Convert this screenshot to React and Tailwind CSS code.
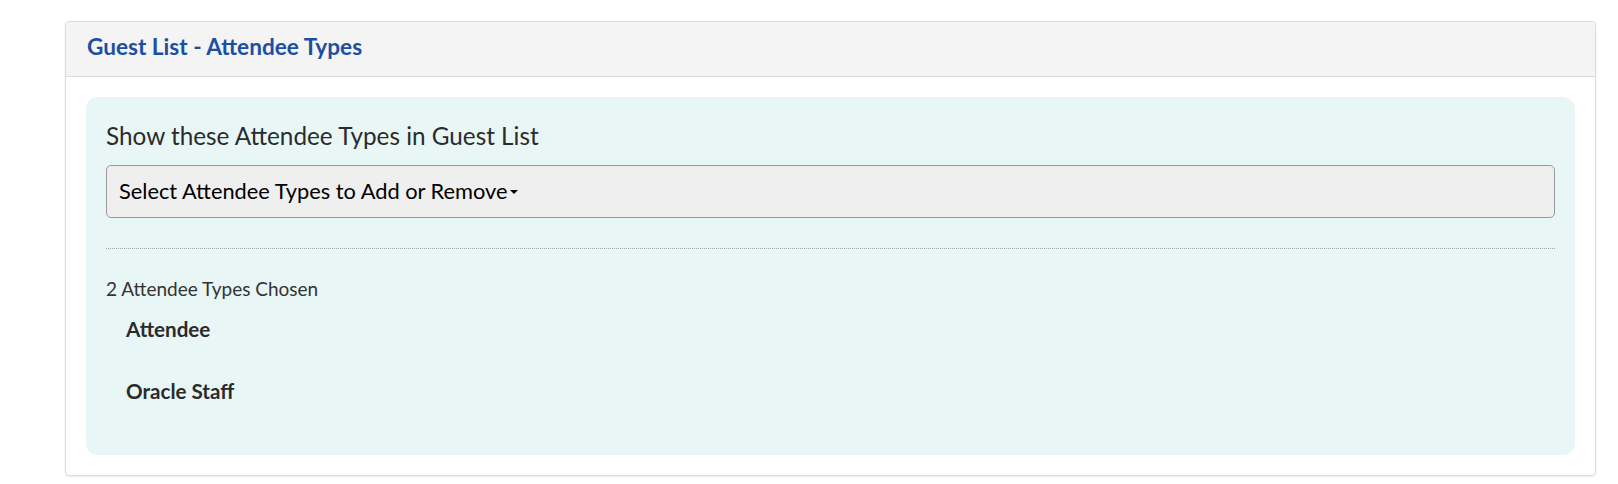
import { useState } from 'react'

const CHOSEN = ['Attendee', 'Oracle Staff']

export default function App() {
  const [open, setOpen] = useState(false)

  return (
    <div className="min-h-[484px] bg-white pt-[21px] pl-[65px] pr-[22px] font-['Lato',sans-serif]">
      <div className="overflow-hidden rounded-[4px] border border-[#dcdcdc] bg-white shadow-[0_1px_2px_rgba(0,0,0,0.08)]">
        {/* Header */}
        <div className="flex h-[55px] items-center border-b border-[#dcdcdc] bg-[#f4f4f4] px-[21px] pb-[4px]">
          <h2 className="text-[22.6px] font-bold leading-[28px] text-[#1c4fa1]">Guest List - Attendee Types</h2>
        </div>

        {/* Body */}
        <div className="p-[20px]">
          <div className="rounded-[12px] bg-[#e8f6f6] px-[20px] pt-[20px] pb-[50px]">
            <p className="text-[24.3px] leading-[38px] text-[#2b2b2b]">Show these Attendee Types in Guest List</p>

            <button
              type="button"
              onClick={() => setOpen(!open)}
              className="mt-[10px] flex h-[53px] w-full items-center rounded-[5px] border border-[#9a9a9a] bg-[#efefef] px-[12px] text-left text-[21.8px] text-black"
            >
              Select Attendee Types to Add or Remove
              <span className="ml-[2px] inline-block h-0 w-0 border-x-[4px] border-t-[4px] border-x-transparent border-t-black" />
            </button>

            <hr className="mt-[30px] border-0 border-t border-dotted border-[#9aa7a7]" />

            <p className="mt-[27px] text-[19px] leading-[26px] text-[#333]">{CHOSEN.length} Attendee Types Chosen</p>

            <ul className="mt-[13px] pl-[20px]">
              {CHOSEN.map((name, i) => (
                <li key={name} className={'text-[20.6px] font-bold leading-[28px] text-[#2b2b2b] ' + (i > 0 ? 'mt-[34px]' : '')}>
                  {name}
                </li>
              ))}
            </ul>
          </div>
        </div>
      </div>
    </div>
  )
}
